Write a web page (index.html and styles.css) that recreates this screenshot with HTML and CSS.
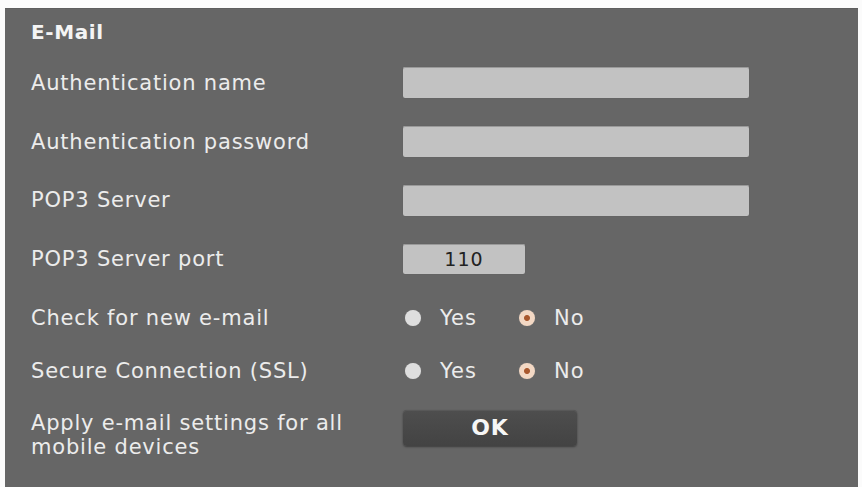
FILE: index.html
```html
<!DOCTYPE html>
<html>
<head>
<meta charset="utf-8">
<link rel="stylesheet" href="styles.css">
</head>
<body>
<div class="panel">
  <h1 class="title">E-Mail</h1>
  <div class="form">
    <div class="label">Authentication name</div>
    <div class="ctrl"><span class="input wide"></span></div>

    <div class="label">Authentication password</div>
    <div class="ctrl"><span class="input wide"></span></div>

    <div class="label">POP3 Server</div>
    <div class="ctrl"><span class="input wide"></span></div>

    <div class="label">POP3 Server port</div>
    <div class="ctrl"><span class="input port">110</span></div>

    <div class="label">Check for new e-mail</div>
    <div class="ctrl radios">
      <span class="opt"><span class="radio"></span>Yes</span>
      <span class="opt"><span class="radio on"></span>No</span>
    </div>

    <div class="label">Secure Connection (SSL)</div>
    <div class="ctrl radios">
      <span class="opt"><span class="radio"></span>Yes</span>
      <span class="opt"><span class="radio on"></span>No</span>
    </div>

    <div class="label last">Apply e-mail settings for all<br>mobile devices</div>
    <div class="ctrl last"><span class="btn">OK</span></div>
  </div>
</div>
</body>
</html>
```
FILE: styles.css
```css
html, body {
  margin: 0;
  padding: 0;
  background: #fbfbfb;
  height: 100%;
  overflow: hidden;
}
body {
  font-family: "DejaVu Sans", Verdana, sans-serif;
  color: #ececec;
}
.panel {
  margin: 8px 4px 0 5px;
  background: #666666;
  height: 500px;
  padding: 12px 0 0 26px;
  box-sizing: border-box;
  border-top: 1px solid #5e5e5e;
}
.title {
  margin: 0;
  font-size: 20px;
  line-height: 22px;
  letter-spacing: 0.6px;
  font-weight: bold;
  color: #f4f4f4;
}
.form {
  display: grid;
  grid-template-columns: 372px 1fr;
  grid-template-rows: 59px 59px 58px 59px 59px 48px 60px;
  margin-top: 10px;
  align-items: center;
}
.label {
  font-size: 21px;
  line-height: 24px;
  letter-spacing: 0.8px;
}
.label.last, .ctrl.last {
  align-self: start;
}
.label.last {
  margin-top: 16px;
}
.ctrl.last {
  margin-top: 15px;
}
.ctrl {
  display: flex;
  align-items: center;
}
.input {
  display: block;
  height: 31px;
  background: #c2c2c2;
  border-radius: 2px;
  box-shadow: inset 0 1px 0 #9a9a9a, 0 0 1px #555;
  box-sizing: border-box;
}
.input.wide {
  width: 346px;
}
.input.port {
  width: 122px;
  height: 30px;
  text-align: center;
  font-size: 19px;
  letter-spacing: 1px;
  line-height: 30px;
  color: #222;
}
.opt {
  display: flex;
  align-items: center;
  font-size: 21px;
  letter-spacing: 1px;
  width: 114px;
}
.radio {
  width: 16px;
  height: 16px;
  border-radius: 50%;
  background: #dedede;
  margin: 0 19px 0 2px;
  box-shadow: 0 0 1px #888;
}
.radio.on {
  background: radial-gradient(circle, #a8582e 0 2.5px, #f3d8c4 3.5px);
}
.btn {
  display: block;
  width: 174px;
  height: 36px;
  line-height: 36px;
  text-align: center;
  background: linear-gradient(#4e4e4e, #434343);
  border-radius: 4px;
  box-shadow: 0 1px 2px #3c3c3c, inset 0 1px 0 #585858;
  font-weight: bold;
  font-size: 22px;
  letter-spacing: 1px;
  color: #f6f6f6;
}
```
